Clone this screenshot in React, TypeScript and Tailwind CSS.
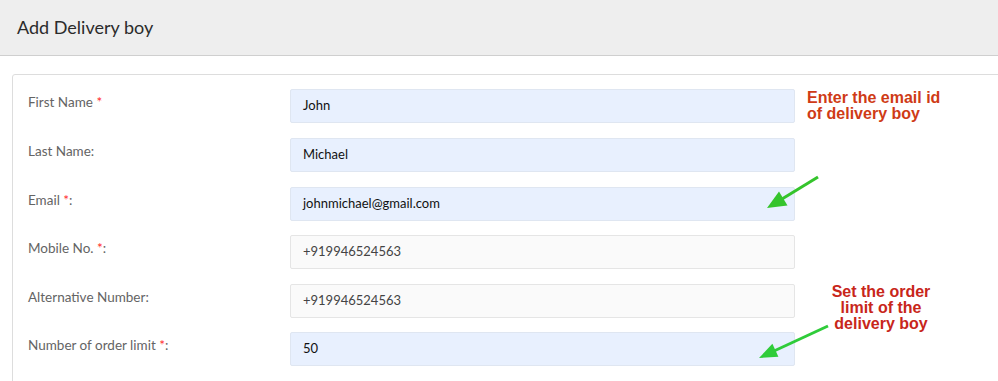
import React from 'react';

interface Field {
  label: string;
  required?: boolean;
  colon?: boolean;
  value: string;
  filled: boolean;
  gap: string;
}

const fields: Field[] = [
  { label: 'First Name', required: true, colon: false, value: 'John', filled: true, gap: 'mt-0' },
  { label: 'Last Name', colon: true, value: 'Michael', filled: true, gap: 'mt-[15px]' },
  { label: 'Email', required: true, colon: true, value: 'johnmichael@gmail.com', filled: true, gap: 'mt-[15px]' },
  { label: 'Mobile No.', required: true, colon: true, value: '+919946524563', filled: false, gap: 'mt-[14px]' },
  { label: 'Alternative Number', colon: true, value: '+919946524563', filled: false, gap: 'mt-[15px]' },
  { label: 'Number of order limit', required: true, colon: true, value: '50', filled: true, gap: 'mt-[14px]' },
];

function FormRow({ field }: { field: Field }) {
  return (
    <div className={`flex items-start ${field.gap}`}>
      <label className="w-[262px] shrink-0 pt-[3px] text-[13.5px] leading-[20px] text-[#646464]">
        {field.label}
        {field.required && <span className="text-[#ff2a2a]"> *</span>}
        {field.colon && ':'}
      </label>
      <div
        className={`flex h-[34px] w-[505px] items-center rounded-[2px] border px-[12px] text-[13px] ${
          field.filled
            ? 'border-[#dfe6f1] bg-[#e8f0fe] text-[#111]'
            : 'border-[#e5e5e5] bg-[#fafafa] text-[#444]'
        }`}
      >
        {field.value}
      </div>
    </div>
  );
}

export default function App() {
  return (
    <div className="relative h-[381px] w-[998px] overflow-hidden bg-white font-['Lato',sans-serif]">
      {/* Page header */}
      <div className="flex h-[56px] items-center border-b border-[#cfcfcf] bg-[#eeeeee] px-[17px]">
        <h1 className="text-[18px] text-[#2b2b2b]">Add Delivery boy</h1>
      </div>

      {/* Form card */}
      <div className="ml-[12px] mr-[-20px] mt-[18px] rounded-[3px] border border-[#dddddd] pb-[20px] pl-[15px] pt-[14px]">
        <div className="flex flex-col">
          {fields.map((f) => (
            <FormRow key={f.label} field={f} />
          ))}
        </div>
      </div>

      {/* Annotations */}
      <div className="absolute left-[807px] top-[90px] font-['Liberation_Sans',sans-serif] text-[16px] font-bold leading-[16px] text-[#cf3b16]">
        Enter the email id
        <br />
        of delivery boy
      </div>
      <div className="absolute left-[826px] top-[284px] w-[110px] text-center font-['Liberation_Sans',sans-serif] text-[16px] font-bold leading-[16px] text-[#c8261a]">
        Set the order
        <br />
        limit of the
        <br />
        delivery boy
      </div>

      <svg className="pointer-events-none absolute left-0 top-0" width="998" height="381">
        <line x1="818" y1="177" x2="782" y2="199" stroke="#35c42c" strokeWidth="3" />
        <polygon points="767,208 779,191.5 787.5,205.5" fill="#35c42c" />
        <line x1="828" y1="326" x2="774" y2="351" stroke="#2fcc3a" strokeWidth="3" />
        <polygon points="759,358 772.4,343.8 778.4,356.8" fill="#2fcc3a" />
      </svg>
    </div>
  );
}
